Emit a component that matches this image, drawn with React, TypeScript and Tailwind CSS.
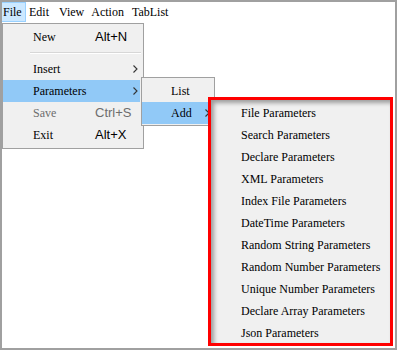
const serif = "font-['Liberation_Serif','Times_New_Roman',serif]";
const sans = "font-['Liberation_Sans',Arial,sans-serif]";

const Chevron = () => (
  <svg width="5" height="8" viewBox="0 0 5 8" className="shrink-0">
    <polyline points="0.5,0.5 4,4 0.5,7.5" fill="none" stroke="#333" strokeWidth="1.1" />
  </svg>
);

type Item = { label: string; shortcut?: string; sub?: boolean; active?: boolean; disabled?: boolean };

const fileItems: Item[] = [
  { label: "Insert", sub: true },
  { label: "Parameters", sub: true, active: true },
  { label: "Save", shortcut: "Ctrl+S", disabled: true },
  { label: "Exit", shortcut: "Alt+X" },
];

const addItems = [
  "File Parameters",
  "Search Parameters",
  "Declare Parameters",
  "XML Parameters",
  "Index File Parameters",
  "DateTime Parameters",
  "Random String Parameters",
  "Random Number Parameters",
  "Unique Number Parameters",
  "Declare Array Parameters",
  "Json Parameters",
];

const FileRow = ({ item }: { item: Item }) => (
  <div
    className={`mr-[3px] flex h-[22px] items-center ${item.active ? "bg-[#91c9f7]" : ""} ${
      item.disabled ? "text-[#6d6d6d]" : "text-black"
    }`}
  >
    <span className="w-[92px] pl-[30px]">{item.label}</span>
    {item.shortcut && <span className={`${sans} text-[13px]`}>{item.shortcut}</span>}
    {item.sub && (
      <span className="ml-auto mr-[2px]">
        <Chevron />
      </span>
    )}
  </div>
);

export default function App() {
  return (
    <div className={`relative h-[350px] w-[397px] overflow-hidden border-2 border-[#a0a0a0] bg-white text-[12px] ${serif}`}>
      {/* menu bar */}
      <div className="flex h-[21px] items-start leading-[19px] text-black">
        <span className="-ml-px h-[20px] w-[25px] border border-[#99d1ff] bg-[#cce8ff] pl-px">File</span>
        <span className="ml-[3px] mt-px">Edit</span>
        <span className="ml-[10px] mt-px">View</span>
        <span className="ml-[7px] mt-px">Action</span>
        <span className="ml-[8px] mt-px">TabList</span>
      </div>

      {/* File menu */}
      <div className="absolute left-0 top-[21px] w-[142px] border border-[#a0a0a0] bg-[#f0f0f0] py-[2px]">
        <div className="mr-[3px] flex h-[22px] items-center">
          <span className="w-[92px] pl-[30px]">New</span>
          <span className={`${sans} text-[13px]`}>Alt+N</span>
        </div>
        <div className="flex h-[10px] flex-col justify-center pl-[27px] pr-[2px]">
          <div className="h-px bg-[#d7d7d7]" />
          <div className="h-px bg-white" />
        </div>
        {fileItems.map((it) => (
          <FileRow key={it.label} item={it} />
        ))}
      </div>

      {/* Parameters submenu */}
      <div className="absolute left-[139px] top-[75px] w-[74px] border border-[#a0a0a0] bg-[#f0f0f0] pb-px pt-[2px]">
        <div className="flex h-[22px] items-center pl-[29px]">List</div>
        <div className="mr-[3px] flex h-[22px] items-center bg-[#91c9f7] pl-[29px]">
          <span>Add</span>
          <span className="ml-[13px]">
            <Chevron />
          </span>
        </div>
      </div>

      {/* Add submenu */}
      <div className="absolute left-[206px] top-[95px] h-[249px] w-[185px] border-[3px] border-[#ff0000] bg-[#f0f0f0] pt-[2px] shadow-[inset_3px_3px_4px_rgba(0,0,0,0.35)]">
        {addItems.map((t) => (
          <div key={t} className="flex h-[22px] items-center pl-[30px] text-black">
            {t}
          </div>
        ))}
      </div>
    </div>
  );
}
